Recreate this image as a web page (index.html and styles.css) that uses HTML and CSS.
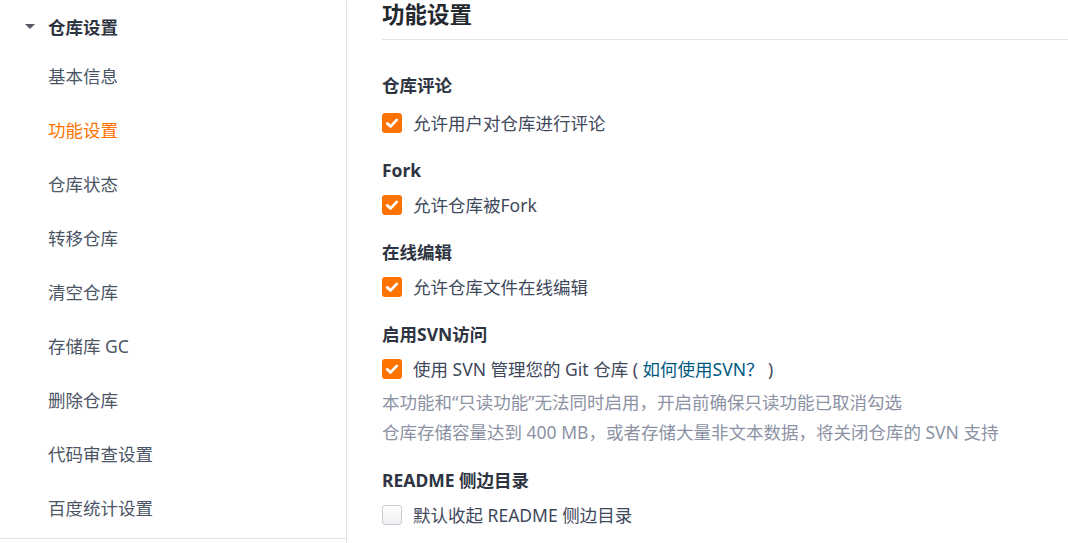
FILE: index.html
```html
<!DOCTYPE html>
<html lang="zh-CN">
<head>
<meta charset="utf-8">
<title>功能设置</title>
<link rel="stylesheet" href="styles.css">
</head>
<body>
<div class="page">
  <aside class="sidebar">
    <div class="menu-group">
      <div class="menu-title"><span class="caret"></span>仓库设置</div>
      <ul class="menu">
        <li class="menu-item">基本信息</li>
        <li class="menu-item active">功能设置</li>
        <li class="menu-item">仓库状态</li>
        <li class="menu-item">转移仓库</li>
        <li class="menu-item">清空仓库</li>
        <li class="menu-item">存储库 GC</li>
        <li class="menu-item">删除仓库</li>
        <li class="menu-item">代码审查设置</li>
        <li class="menu-item">百度统计设置</li>
      </ul>
    </div>
  </aside>
  <main class="content">
    <h2 class="page-title">功能设置</h2>

    <section class="setting first">
      <h3 class="setting-title">仓库评论</h3>
      <label class="option">
        <span class="checkbox checked"><svg viewBox="0 0 20 20" width="20" height="20"><path d="M5.2 10.4 L8.6 13.4 L14.8 6.9" fill="none" stroke="#fff" stroke-width="2.8" stroke-linecap="round" stroke-linejoin="round"/></svg></span>
        <span class="option-text">允许用户对仓库进行评论</span>
      </label>
    </section>

    <section class="setting">
      <h3 class="setting-title">Fork</h3>
      <label class="option">
        <span class="checkbox checked"><svg viewBox="0 0 20 20" width="20" height="20"><path d="M5.2 10.4 L8.6 13.4 L14.8 6.9" fill="none" stroke="#fff" stroke-width="2.8" stroke-linecap="round" stroke-linejoin="round"/></svg></span>
        <span class="option-text">允许仓库被Fork</span>
      </label>
    </section>

    <section class="setting">
      <h3 class="setting-title">在线编辑</h3>
      <label class="option">
        <span class="checkbox checked"><svg viewBox="0 0 20 20" width="20" height="20"><path d="M5.2 10.4 L8.6 13.4 L14.8 6.9" fill="none" stroke="#fff" stroke-width="2.8" stroke-linecap="round" stroke-linejoin="round"/></svg></span>
        <span class="option-text">允许仓库文件在线编辑</span>
      </label>
    </section>

    <section class="setting">
      <h3 class="setting-title">启用SVN访问</h3>
      <label class="option">
        <span class="checkbox checked"><svg viewBox="0 0 20 20" width="20" height="20"><path d="M5.2 10.4 L8.6 13.4 L14.8 6.9" fill="none" stroke="#fff" stroke-width="2.8" stroke-linecap="round" stroke-linejoin="round"/></svg></span>
        <span class="option-text">使用 SVN 管理您的 Git 仓库 ( <a class="link" href="#">如何使用SVN？</a> )</span>
      </label>
      <p class="hint">本功能和“只读功能”无法同时启用，开启前确保只读功能已取消勾选</p>
      <p class="hint">仓库存储容量达到 400 MB，或者存储大量非文本数据，将关闭仓库的 SVN 支持</p>
    </section>

    <section class="setting">
      <h3 class="setting-title">README 侧边目录</h3>
      <label class="option">
        <span class="checkbox"></span>
        <span class="option-text">默认收起 README 侧边目录</span>
      </label>
    </section>
  </main>
</div>
</body>
</html>
```

FILE: styles.css
```css
* {
  box-sizing: border-box;
}

html, body {
  margin: 0;
  padding: 0;
  background: #fff;
  overflow: hidden;
}

body {
  font-family: "Noto Sans", "Noto Sans CJK SC", sans-serif;
  color: #40485b;
}

.page {
  display: flex;
  align-items: stretch;
  min-height: 560px;
}

/* ---------- sidebar ---------- */
.sidebar {
  flex: 0 0 348px;
  margin-top: -3px;
  margin-left: -1px;
  border: 1px solid #e3e3e3;
  border-bottom: none;
  border-top-right-radius: 5px;
  background: #fff;
}

.menu-group {
  border-bottom: 1px solid #e3e3e3;
  padding-bottom: 3px;
}

.menu-title {
  display: flex;
  align-items: center;
  padding: 16px 0 10px 48px;
  height: 51px;
  line-height: 24px;
  font-size: 17.5px;
  font-weight: 700;
  color: #2e3441;
  position: relative;
}

.caret {
  position: absolute;
  left: 25px;
  top: 26px;
  width: 0;
  height: 0;
  border-left: 5px solid transparent;
  border-right: 5px solid transparent;
  border-top: 5px solid #555a66;
}

.menu {
  list-style: none;
  margin: 0;
  padding: 0;
}

.menu-item {
  height: 54px;
  line-height: 54px;
  padding-left: 48px;
  font-size: 17.5px;
  color: #4c5566;
}

.menu-item.active {
  color: #fe7300;
}

/* ---------- content ---------- */
.content {
  flex: 1;
  margin-left: 35px;
}

.page-title {
  margin: 0;
  height: 40px;
  line-height: 30px;
  padding-bottom: 9px;
  font-size: 22.5px;
  font-weight: 700;
  color: #24292f;
  border-bottom: 1px solid #e3e3e3;
}

.setting {
  margin-top: 21px;
}

.setting.first {
  margin-top: 33px;
}

.setting-title {
  margin: 0 0 9px;
  height: 24px;
  line-height: 24px;
  font-size: 17.5px;
  font-weight: 700;
  color: #2e3441;
}

.setting.first .setting-title {
  margin-bottom: 12px;
}

.option {
  display: flex;
  align-items: center;
  height: 28px;
  font-size: 17.5px;
  color: #40485b;
  cursor: pointer;
}

.checkbox {
  flex: 0 0 20px;
  width: 20px;
  height: 20px;
  border-radius: 3px;
  margin-right: 11px;
  border: 1px solid #c9cdd4;
  background: linear-gradient(#ffffff, #eceef1);
  display: flex;
}

.checkbox.checked {
  border: none;
  background: #fe7300;
}

.option-text {
  line-height: 28px;
}

.link {
  color: #005980;
  text-decoration: none;
}

.hint {
  margin: 0;
  line-height: 30px;
  font-size: 17.5px;
  color: #8c92a4;
}

.option + .hint {
  margin-top: 4px;
}
```
